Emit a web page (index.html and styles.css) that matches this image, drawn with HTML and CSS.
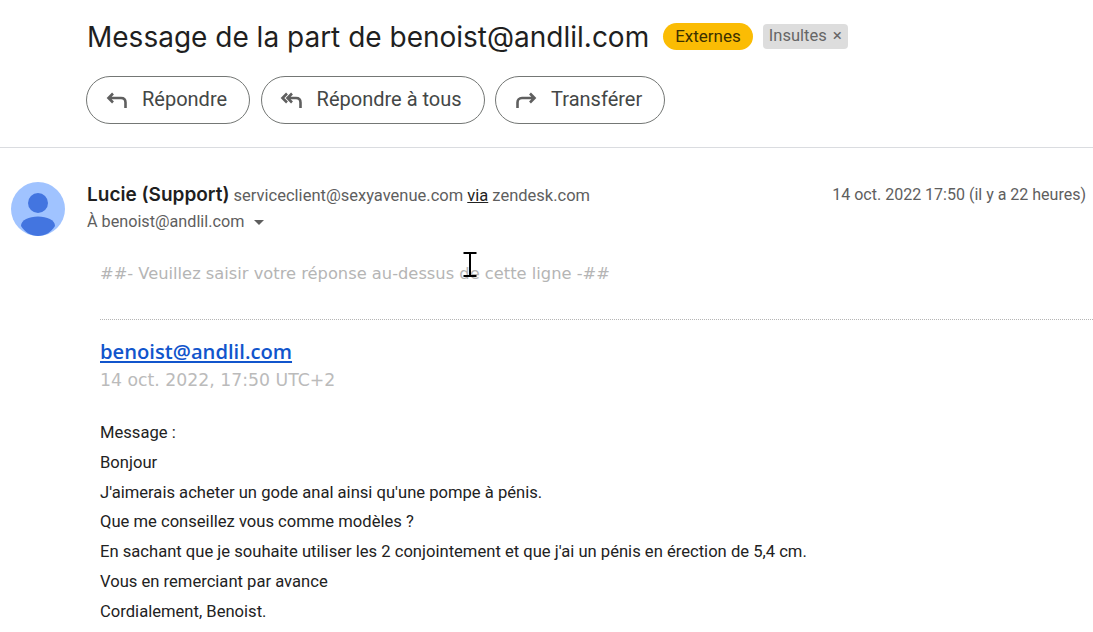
FILE: index.html
```html
<!DOCTYPE html>
<html lang="fr">
<head>
    <meta charset="UTF-8">
    <meta name="viewport" content="width=device-width, initial-scale=1.0">
    <title>Message de la part de benoist@andlil.com</title>
    <link rel="stylesheet" href="styles.css">
</head>
<body>
    <header class="top">
        <div class="subject-row">
            <h1 class="subject">Message de la part de benoist@andlil.com</h1>
            <span class="tag-ext">Externes</span>
            <span class="tag-label">Insultes <span class="tag-x">&times;</span></span>
        </div>
        <div class="actions">
            <button class="action-btn">
                <svg class="action-icon" viewBox="0 0 24 24"><path d="M8 5.500 3.500 10 8 14.500M4 10h12c3 0 4.500 2 4.500 4.500V20" /></svg>
                Répondre
            </button>
            <button class="action-btn">
                <svg class="action-icon" viewBox="0 0 24 24"><path d="M7 5.500 2.500 10 7 14.500M12 5.500 7.500 10l4.500 4.500M8 10h8c3 0 4.500 2 4.500 4.500V20" /></svg>
                Répondre à tous
            </button>
            <button class="action-btn">
                <svg class="action-icon" viewBox="0 0 24 24"><path d="M16 5.500 20.500 10 16 14.500M20 10H8c-3 0-4.500 2-4.500 4.500V20" /></svg>
                Transférer
            </button>
        </div>
    </header>

    <main class="mail">
        <div class="avatar">
            <svg viewBox="0 0 54 54" width="54" height="54">
                <circle cx="27" cy="27" r="27" fill="#a0c3ff" />
                <circle cx="27" cy="21" r="10" fill="#4375e0" />
                <path d="M10 44c0-6 8-9.500 17-9.500S44 38 44 44c-4 6.500-10 10-17 10s-13-3.500-17-10z" fill="#4375e0" />
            </svg>
        </div>
        <div class="mail-main">
            <div class="sender-row">
                <div class="sender">
                    <b class="sender-name">Lucie (Support)</b>
                    serviceclient@sexyavenue.com <u class="via">via</u> zendesk.com
                </div>
                <div class="mail-date">14 oct. 2022 17:50 (il y a 22 heures)</div>
            </div>
            <div class="to-row">
                À benoist@andlil.com
                <span class="caret"></span>
            </div>
            <div class="body">
                <p class="reply-line">##- Veuillez saisir votre réponse au-dessus de cette ligne -##</p>
                <hr class="dotted">
                <a class="author" href="#">benoist@andlil.com</a>
                <p class="sent-date">14 oct. 2022, 17:50 UTC+2</p>
                <div class="text">
                    <p>Message :</p>
                    <p>Bonjour</p>
                    <p>J'aimerais acheter un gode anal ainsi qu'une pompe à pénis.</p>
                    <p>Que me conseillez vous comme modèles ?</p>
                    <p>En sachant que je souhaite utiliser les 2 conjointement et que j'ai un pénis en érection de 5,4 cm.</p>
                    <p>Vous en remerciant par avance</p>
                    <p>Cordialement, Benoist.</p>
                </div>
            </div>
        </div>
    </main>

    <!-- text cursor caught in the screenshot -->
    <svg class="ibeam" width="14" height="25" viewBox="0 0 14 25"><path d="M0.500 1h13M7 1v23M0.500 24h13" /></svg>
</body>
</html>
```

FILE: styles.css
```css
html, body {
    height: 100%;
    overflow: hidden;
}
body {
    margin: 0;
    background: #fff;
    font-family: Roboto, Arial, sans-serif;
    color: #222;
    position: relative;
}
.top {
    height: 147px;
    border-bottom: 1px solid #dadce0;
    padding-left: 87px;
}
.subject-row {
    display: flex;
    align-items: center;
    padding-top: 19px;
    height: 35px;
}
.subject {
    margin: 0;
    font-family: Inter, Arial, sans-serif;
    font-size: 28px;
    font-weight: 400;
    color: #1f1f1f;
    white-space: nowrap;
}
.tag-ext {
    margin-left: 14px;
    background: #fbbc04;
    border-radius: 14px;
    height: 27px;
    line-height: 27px;
    padding: 0 12px;
    font-size: 17px;
    color: #3c3000;
}
.tag-label {
    margin-left: 10px;
    background: #dddddd;
    border-radius: 4px;
    height: 25px;
    line-height: 23px;
    padding: 0 6px;
    font-size: 16.500px;
    color: #666;
    white-space: nowrap;
}
.tag-x {
    font-size: 17px;
    margin-left: 2px;
}
.actions {
    display: flex;
    gap: 10.500px;
    margin-top: 22px;
    margin-left: -1px;
}
.action-btn {
    display: flex;
    align-items: center;
    height: 48px;
    padding: 0 22px 3px 18px;
    background: #fff;
    border: 1px solid #747775;
    border-radius: 24px;
    font-family: Roboto, Arial, sans-serif;
    font-size: 20px;
    color: #444746;
    white-space: nowrap;
}
.action-icon {
    width: 24px;
    height: 24px;
    margin: 3px 13px 0 0;
    fill: none;
    stroke: #5f5f5f;
    stroke-width: 2.600;
}
.mail {
    display: flex;
    padding-top: 34px;
}
.avatar {
    width: 54px;
    height: 54px;
    margin: 0 22px 0 11px;
    flex-shrink: 0;
}
.mail-main {
    flex: 1;
    min-width: 0;
}
.sender-row {
    display: flex;
    justify-content: space-between;
    padding: 1px 7px 0 0;
    height: 26px;
    line-height: 24px;
    font-size: 16.500px;
    color: #5e5e5e;
}
.sender-name {
    font-family: Inter, Arial, sans-serif;
    font-size: 19px;
    font-weight: 600;
    color: #1f1f1f;
}
.mail-date {
    font-size: 16px;
}
.via {
    color: #222;
}
.to-row {
    height: 26px;
    line-height: 26px;
    font-size: 16.200px;
    color: #5e5e5e;
}
.caret {
    display: inline-block;
    margin-left: 6px;
    vertical-align: middle;
    border-left: 5px solid transparent;
    border-right: 5px solid transparent;
    border-top: 5px solid #5e5e5e;
}
.body {
    padding: 27px 0 0 13px;
}
.reply-line {
    margin: 0;
    font-family: "DejaVu Sans", Verdana, sans-serif;
    font-size: 16.300px;
    line-height: 24px;
    color: #b5b5b5;
}
.dotted {
    margin: 33px 0 0;
    border: 0;
    border-top: 1px dotted #b5b5b5;
}
.author {
    display: block;
    margin-top: 18px;
    font-family: "Open Sans", Verdana, sans-serif;
    font-size: 20.200px;
    font-weight: 600;
    line-height: 26px;
    color: #1155cc;
}
.sent-date {
    margin: 4px 0 0;
    font-family: "DejaVu Sans", Verdana, sans-serif;
    font-size: 17.300px;
    line-height: 24px;
    color: #bbb;
}
.text {
    margin-top: 26px;
    font-size: 16.600px;
    line-height: 29.800px;
    color: #222;
}
.text p {
    margin: 0;
}
.ibeam {
    position: absolute;
    left: 463px;
    top: 252px;
    fill: none;
    stroke: #000;
    stroke-width: 2;
}
```
